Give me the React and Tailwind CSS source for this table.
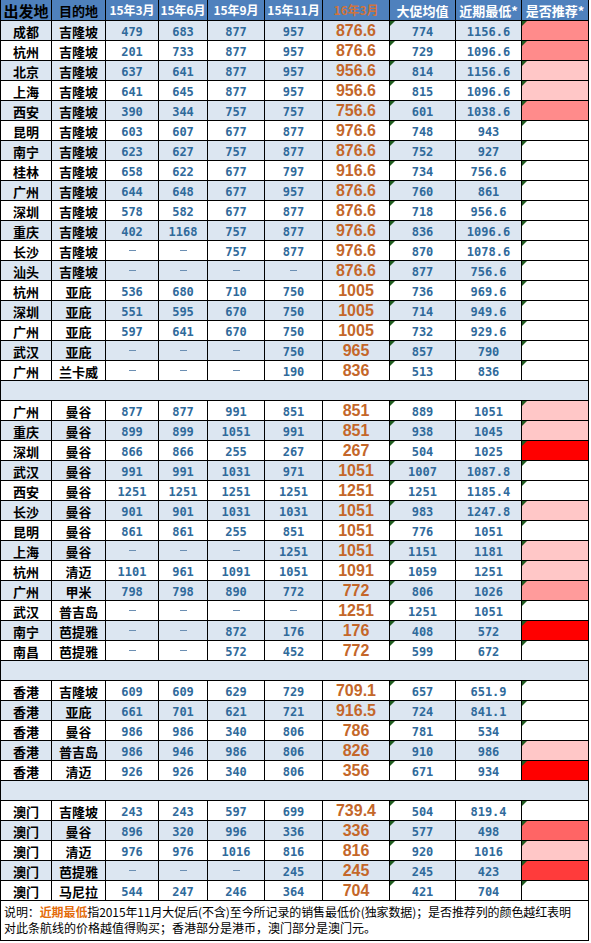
const cols = "grid grid-cols-[52px_54px_53px_49px_57px_58px_67px_66px_66px_67px]";

const W = "#ffffff";
const S = "#ff8b8b";
const P = "#ffc7c7";
const R = "#ff0000";
const D = "#ff9b9b";
const M = "#ff6565";
const Q = "#ff3b3b";

const sections = [
  [
    ["成都", "吉隆坡", "479", "683", "877", "957", "876.6", "774", "1156.6", S],
    ["杭州", "吉隆坡", "201", "733", "877", "957", "876.6", "729", "1096.6", S],
    ["北京", "吉隆坡", "637", "641", "877", "957", "956.6", "814", "1156.6", P],
    ["上海", "吉隆坡", "641", "645", "877", "957", "956.6", "815", "1096.6", P],
    ["西安", "吉隆坡", "390", "344", "757", "757", "756.6", "601", "1038.6", S],
    ["昆明", "吉隆坡", "603", "607", "677", "877", "976.6", "748", "943", W],
    ["南宁", "吉隆坡", "623", "627", "757", "877", "876.6", "752", "927", W],
    ["桂林", "吉隆坡", "658", "622", "677", "797", "916.6", "734", "756.6", W],
    ["广州", "吉隆坡", "644", "648", "677", "957", "876.6", "760", "861", W],
    ["深圳", "吉隆坡", "578", "582", "677", "877", "876.6", "718", "956.6", W],
    ["重庆", "吉隆坡", "402", "1168", "757", "877", "976.6", "836", "1096.6", W],
    ["长沙", "吉隆坡", "-", "-", "757", "877", "976.6", "870", "1078.6", W],
    ["汕头", "吉隆坡", "-", "-", "-", "-", "876.6", "877", "756.6", W],
    ["杭州", "亚庇", "536", "680", "710", "750", "1005", "736", "969.6", W],
    ["深圳", "亚庇", "551", "595", "670", "750", "1005", "714", "949.6", W],
    ["广州", "亚庇", "597", "641", "670", "750", "1005", "732", "929.6", W],
    ["武汉", "亚庇", "-", "-", "-", "750", "965", "857", "790", W],
    ["广州", "兰卡威", "-", "-", "-", "190", "836", "513", "836", W],
  ],
  [
    ["广州", "曼谷", "877", "877", "991", "851", "851", "889", "1051", P],
    ["重庆", "曼谷", "899", "899", "1051", "991", "851", "938", "1045", P],
    ["深圳", "曼谷", "866", "866", "255", "267", "267", "504", "1025", R],
    ["武汉", "曼谷", "991", "991", "1031", "971", "1051", "1007", "1087.8", W],
    ["西安", "曼谷", "1251", "1251", "1251", "1251", "1251", "1251", "1185.4", W],
    ["长沙", "曼谷", "901", "901", "1031", "1031", "1051", "983", "1247.8", P],
    ["昆明", "曼谷", "861", "861", "255", "851", "1051", "776", "1051", W],
    ["上海", "曼谷", "-", "-", "-", "1251", "1051", "1151", "1181", P],
    ["杭州", "清迈", "1101", "961", "1091", "1051", "1091", "1059", "1251", P],
    ["广州", "甲米", "798", "798", "890", "772", "772", "806", "1026", D],
    ["武汉", "普吉岛", "-", "-", "-", "-", "1251", "1251", "1051", W],
    ["南宁", "芭提雅", "-", "-", "872", "176", "176", "408", "572", R],
    ["南昌", "芭提雅", "-", "-", "572", "452", "772", "599", "672", W],
  ],
  [
    ["香港", "吉隆坡", "609", "609", "629", "729", "709.1", "657", "651.9", W],
    ["香港", "亚庇", "661", "701", "621", "721", "916.5", "724", "841.1", W],
    ["香港", "曼谷", "986", "986", "340", "806", "786", "781", "534", W],
    ["香港", "普吉岛", "986", "946", "986", "806", "826", "910", "986", P],
    ["香港", "清迈", "926", "926", "340", "806", "356", "671", "934", R],
  ],
  [
    ["澳门", "吉隆坡", "243", "243", "597", "699", "739.4", "504", "819.4", W],
    ["澳门", "曼谷", "896", "320", "996", "336", "336", "577", "498", M],
    ["澳门", "清迈", "976", "976", "1016", "816", "816", "920", "1016", P],
    ["澳门", "芭提雅", "-", "-", "-", "245", "245", "245", "423", Q],
    ["澳门", "马尼拉", "544", "247", "246", "364", "704", "421", "704", W],
  ],
];

const cjk = "font-['Noto_Sans_CJK_SC',sans-serif]";
const mono = "font-['DejaVu_Sans_Mono',monospace]";

// excel's little green corner mark
const Flag = () => (
  <span className="absolute left-0 top-0 w-0 h-0 border-t-[5px] border-r-[5px] border-t-[#1f5c1f] border-r-transparent" />
);

const Cell = ({ children, className = "", flag }) => (
  <div className={`relative h-[20px] flex items-center justify-center border-r border-b border-black overflow-hidden ${className}`}>
    {flag && <Flag />}
    {children}
  </div>
);

const Num = ({ v }) =>
  v === "-" ? (
    <span className="block w-[7px] h-[1px] bg-[#6b8fb3]" />
  ) : (
    <span className={`${mono} text-[12px] font-bold text-[#2f6a9b] leading-none pt-[3px]`}>{v}</span>
  );

const Row = ({ r, blue }) => {
  const bg = blue ? "bg-[#dce6f1]" : "bg-white";
  return (
    <div className={cols}>
      <Cell className={`${bg} border-l`}>
        <span className={`${cjk} text-[13px] font-bold text-black leading-none pt-[2px]`}>{r[0]}</span>
      </Cell>
      <Cell className={bg}>
        <span className={`${cjk} text-[13px] font-bold text-black leading-none pt-[2px]`}>{r[1]}</span>
      </Cell>
      {r.slice(2, 6).map((v, i) => (
        <Cell key={i} className={bg}>
          <Num v={v} />
        </Cell>
      ))}
      <Cell className={bg}>
        <span className="font-['Liberation_Sans',sans-serif] text-[16px] font-bold text-[#c4672a] leading-none">{r[6]}</span>
      </Cell>
      <Cell className={bg} flag>
        <Num v={r[7]} />
      </Cell>
      <Cell className={bg}>
        <Num v={r[8]} />
      </Cell>
      <Cell>
        <span className="absolute inset-0" style={{ backgroundColor: r[9] }} />
        <Flag />
      </Cell>
    </div>
  );
};

const Spacer = () => <div className="h-[20px] bg-[#dce6f1] border-l border-r border-b border-black w-[589px]" />;

const heads = ["出发地", "目的地", "15年3月", "15年6月", "15年9月", "15年11月", "16年3月", "大促均值", "近期最低*", "是否推荐*"];

export default function App() {
  let idx = 0;
  return (
    <div className={`w-[591px] h-[943px] bg-white ${cjk}`}>
      <div className={cols}>
        {heads.map((h, i) => (
          <div
            key={h}
            className={`h-[21px] flex items-center justify-center bg-[#4f81bd] border-r border-b border-black ${i === 0 ? "border-l" : ""}`}
          >
            <span
              className={`${cjk} font-bold leading-none whitespace-nowrap ${
                i === 0 ? "text-[15px] text-black" : i === 1 ? "text-[13px] text-black" : i === 6 ? "text-[12px] text-[#d0743c]" : i < 6 ? "text-[12px] text-white" : "text-[13px] text-white"
              }`}
            >
              {h}
            </span>
          </div>
        ))}
      </div>
      {sections.map((sec, si) => (
        <div key={si}>
          {si > 0 && (() => { idx++; return <Spacer />; })()}
          {sec.map((r, ri) => {
            idx++;
            return <Row key={ri} r={r} blue={idx % 2 === 1} />;
          })}
        </div>
      ))}
      <div className="w-[589px] h-[40px] border-l border-r border-b border-black px-[3px] pt-[3px] text-[12px] leading-[16px] text-black whitespace-nowrap overflow-hidden">
        <div className="tracking-[-0.1px]">
          说明：<span className="font-bold text-[#e46c0a]">近期最低</span>指2015年11月大促后(不含)至今所记录的销售最低价(独家数据)；是否推荐列的颜色越红表明
        </div>
        <div>对此条航线的价格越值得购买；香港部分是港币，澳门部分是澳门元。</div>
      </div>
    </div>
  );
}
